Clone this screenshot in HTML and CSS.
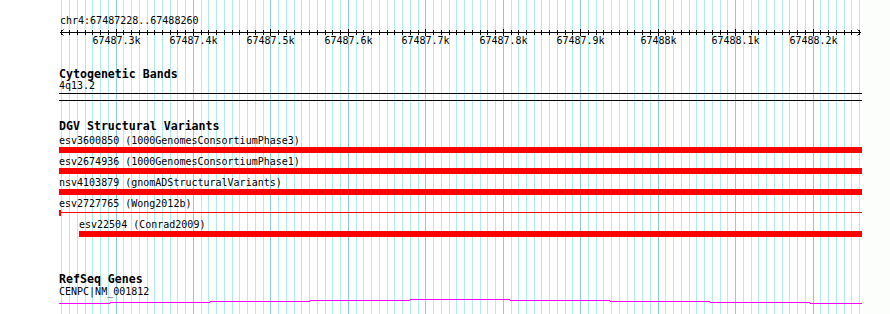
FILE: index.html
```html
<!DOCTYPE html>
<html lang="en">
<head>
    <meta charset="UTF-8">
    <meta name="viewport" content="width=device-width, initial-scale=1.0">
    <title>chr4:67487228..67488260</title>
    <link rel="stylesheet" href="styles.css">
</head>
<body>

<div class="view">
    <!-- grid lines sit under all the tracks -->
    <svg class="grid" id="grid" width="803" height="314"></svg>

    <div class="tracks">
        <div class="ruler">
            <div class="ruler-label">chr4:67487228..67488260</div>
            <svg class="ruler-scale" id="ruler" width="803" height="20"></svg>
        </div>

        <div class="track cyto">
            <div class="track-title">Cytogenetic Bands</div>
            <div class="feature-label">4q13.2</div>
            <div class="band"></div>
        </div>

        <div class="track dgv">
            <div class="track-title">DGV Structural Variants</div>
            <div class="feature">
                <div class="feature-label">esv3600850 (1000GenomesConsortiumPhase3)</div>
                <div class="bar"></div>
            </div>
            <div class="feature">
                <div class="feature-label">esv2674936 (1000GenomesConsortiumPhase1)</div>
                <div class="bar"></div>
            </div>
            <div class="feature">
                <div class="feature-label">nsv4103879 (gnomADStructuralVariants)</div>
                <div class="bar"></div>
            </div>
            <div class="feature">
                <div class="feature-label">esv2727765 (Wong2012b)</div>
                <div class="bar bar-thin"></div>
            </div>
            <div class="feature" style="margin-left: 20px;">
                <div class="feature-label">esv22504 (Conrad2009)</div>
                <div class="bar"></div>
            </div>
        </div>

        <div class="track genes">
            <div class="track-title">RefSeq Genes</div>
            <div class="feature-label">CENPC|NM_001812</div>
            <svg class="gene" width="803" height="8">
                <polyline points="0,6.5 51,6.5 51,5.5 151,5.5 151,4.5 251,4.5 251,3.5 351,3.5 351,2.5 451,2.5 451,3.5 551,3.5 551,4.5 651,4.5 651,5.5 751,5.5 751,6.5 803,6.5"></polyline>
            </svg>
        </div>
    </div>
</div>

<script>
    const START = 67487227;
    const END = 67488260;
    const WIDTH = 800;
    const NS = 'http://www.w3.org/2000/svg';

    const grid = document.getElementById('grid');
    const ruler = document.getElementById('ruler');

    // bp -> x inside the track area
    const toX = bp => 1 + (bp - START) * WIDTH / (END - START);

    function line(parent, x1, y1, x2, y2, cls) {
        const el = document.createElementNS(NS, 'line');
        el.setAttribute('x1', x1);
        el.setAttribute('y1', y1);
        el.setAttribute('x2', x2);
        el.setAttribute('y2', y2);
        el.setAttribute('class', cls);
        parent.appendChild(el);
    }

    // Scale line and arrow heads
    line(ruler, 1, 5.5, 802, 5.5, 'axis');
    const arrows = document.createElementNS(NS, 'path');
    arrows.setAttribute('d', 'M4.5,2.5 L1.5,5.5 L4.5,8.5 M798.5,2.5 L801.5,5.5 L798.5,8.5');
    arrows.setAttribute('class', 'axis');
    ruler.appendChild(arrows);

    // Ticks, grid lines and labels every 10bp
    for (let bp = Math.ceil(START / 10) * 10; bp <= END; bp += 10) {
        const x = Math.round(toX(bp)) - 0.5;
        const major = bp % 100 === 0;
        line(grid, x, 0, x, 314, major ? 'grid-major' : 'grid-minor');
        line(ruler, x, major ? 2 : 3, x, major ? 9 : 8, 'axis');
        if (major) {
            const label = document.createElementNS(NS, 'text');
            label.setAttribute('x', x);
            label.setAttribute('y', 16.5);
            label.setAttribute('class', 'tick-label');
            label.textContent = (bp / 1000) + 'k';
            ruler.appendChild(label);
        }
    }
</script>

</body>
</html>
```

FILE: styles.css
```css
body {
    margin: 0;
    background-color: #fcfefc;
    font-family: "DejaVu Sans Mono", "Liberation Mono", monospace;
    color: #000;
    overflow: hidden;
}
.view {
    position: relative;
    width: 862px;
    height: 314px;
    background-color: #fff;
}
.grid {
    position: absolute;
    left: 59px;
    top: 0;
    z-index: 0;
}
.grid-minor {
    stroke: #aeecee;
    stroke-width: 1;
}
.grid-major {
    stroke: #8ccaea;
    stroke-width: 1;
}
.tracks {
    position: relative;
    z-index: 1;
    display: flow-root;
    padding-top: 15px;
    padding-left: 59px;
}
.ruler-label {
    font-size: 10px;
    line-height: 12px;
    padding-left: 1px;
}
.ruler-scale {
    display: block;
}
.axis {
    stroke: #000;
    stroke-width: 1;
    fill: none;
}
.tick-label {
    font-family: "DejaVu Sans Mono", "Liberation Mono", monospace;
    font-size: 10px;
    text-anchor: middle;
    fill: #000;
}
.track {
    display: flow-root;
}
.track-title {
    font-size: 11.6px;
    font-weight: bold;
    line-height: 13px;
}
.feature-label {
    font-size: 10px;
    line-height: 11px;
    white-space: nowrap;
}
.cyto {
    margin-top: 21px;
}
.cyto .track-title {
    line-height: 12px;
}
.cyto .feature-label {
    line-height: 12px;
}
.band {
    width: 803px;
    height: 6px;
    margin-top: 1px;
    border-top: 1px solid #000;
    border-bottom: 1px solid #000;
}
.dgv {
    margin-top: 19px;
}
.dgv .track-title {
    margin-bottom: 2px;
}
.feature {
    margin-bottom: 3px;
}
.bar {
    height: 6px;
    margin-top: 1px;
    background-color: #ff0000;
}
.bar-thin {
    position: relative;
    background: linear-gradient(#ff0000, #ff0000) 0 2px / 100% 1px no-repeat;
}
.bar-thin::before {
    content: "";
    position: absolute;
    left: 0;
    top: 0;
    width: 2px;
    height: 6px;
    background-color: #ff0000;
}
.genes {
    margin-top: 33px;
}
.gene {
    display: block;
}
.gene polyline {
    fill: none;
    stroke: #ff00ff;
    stroke-width: 1;
}
```
